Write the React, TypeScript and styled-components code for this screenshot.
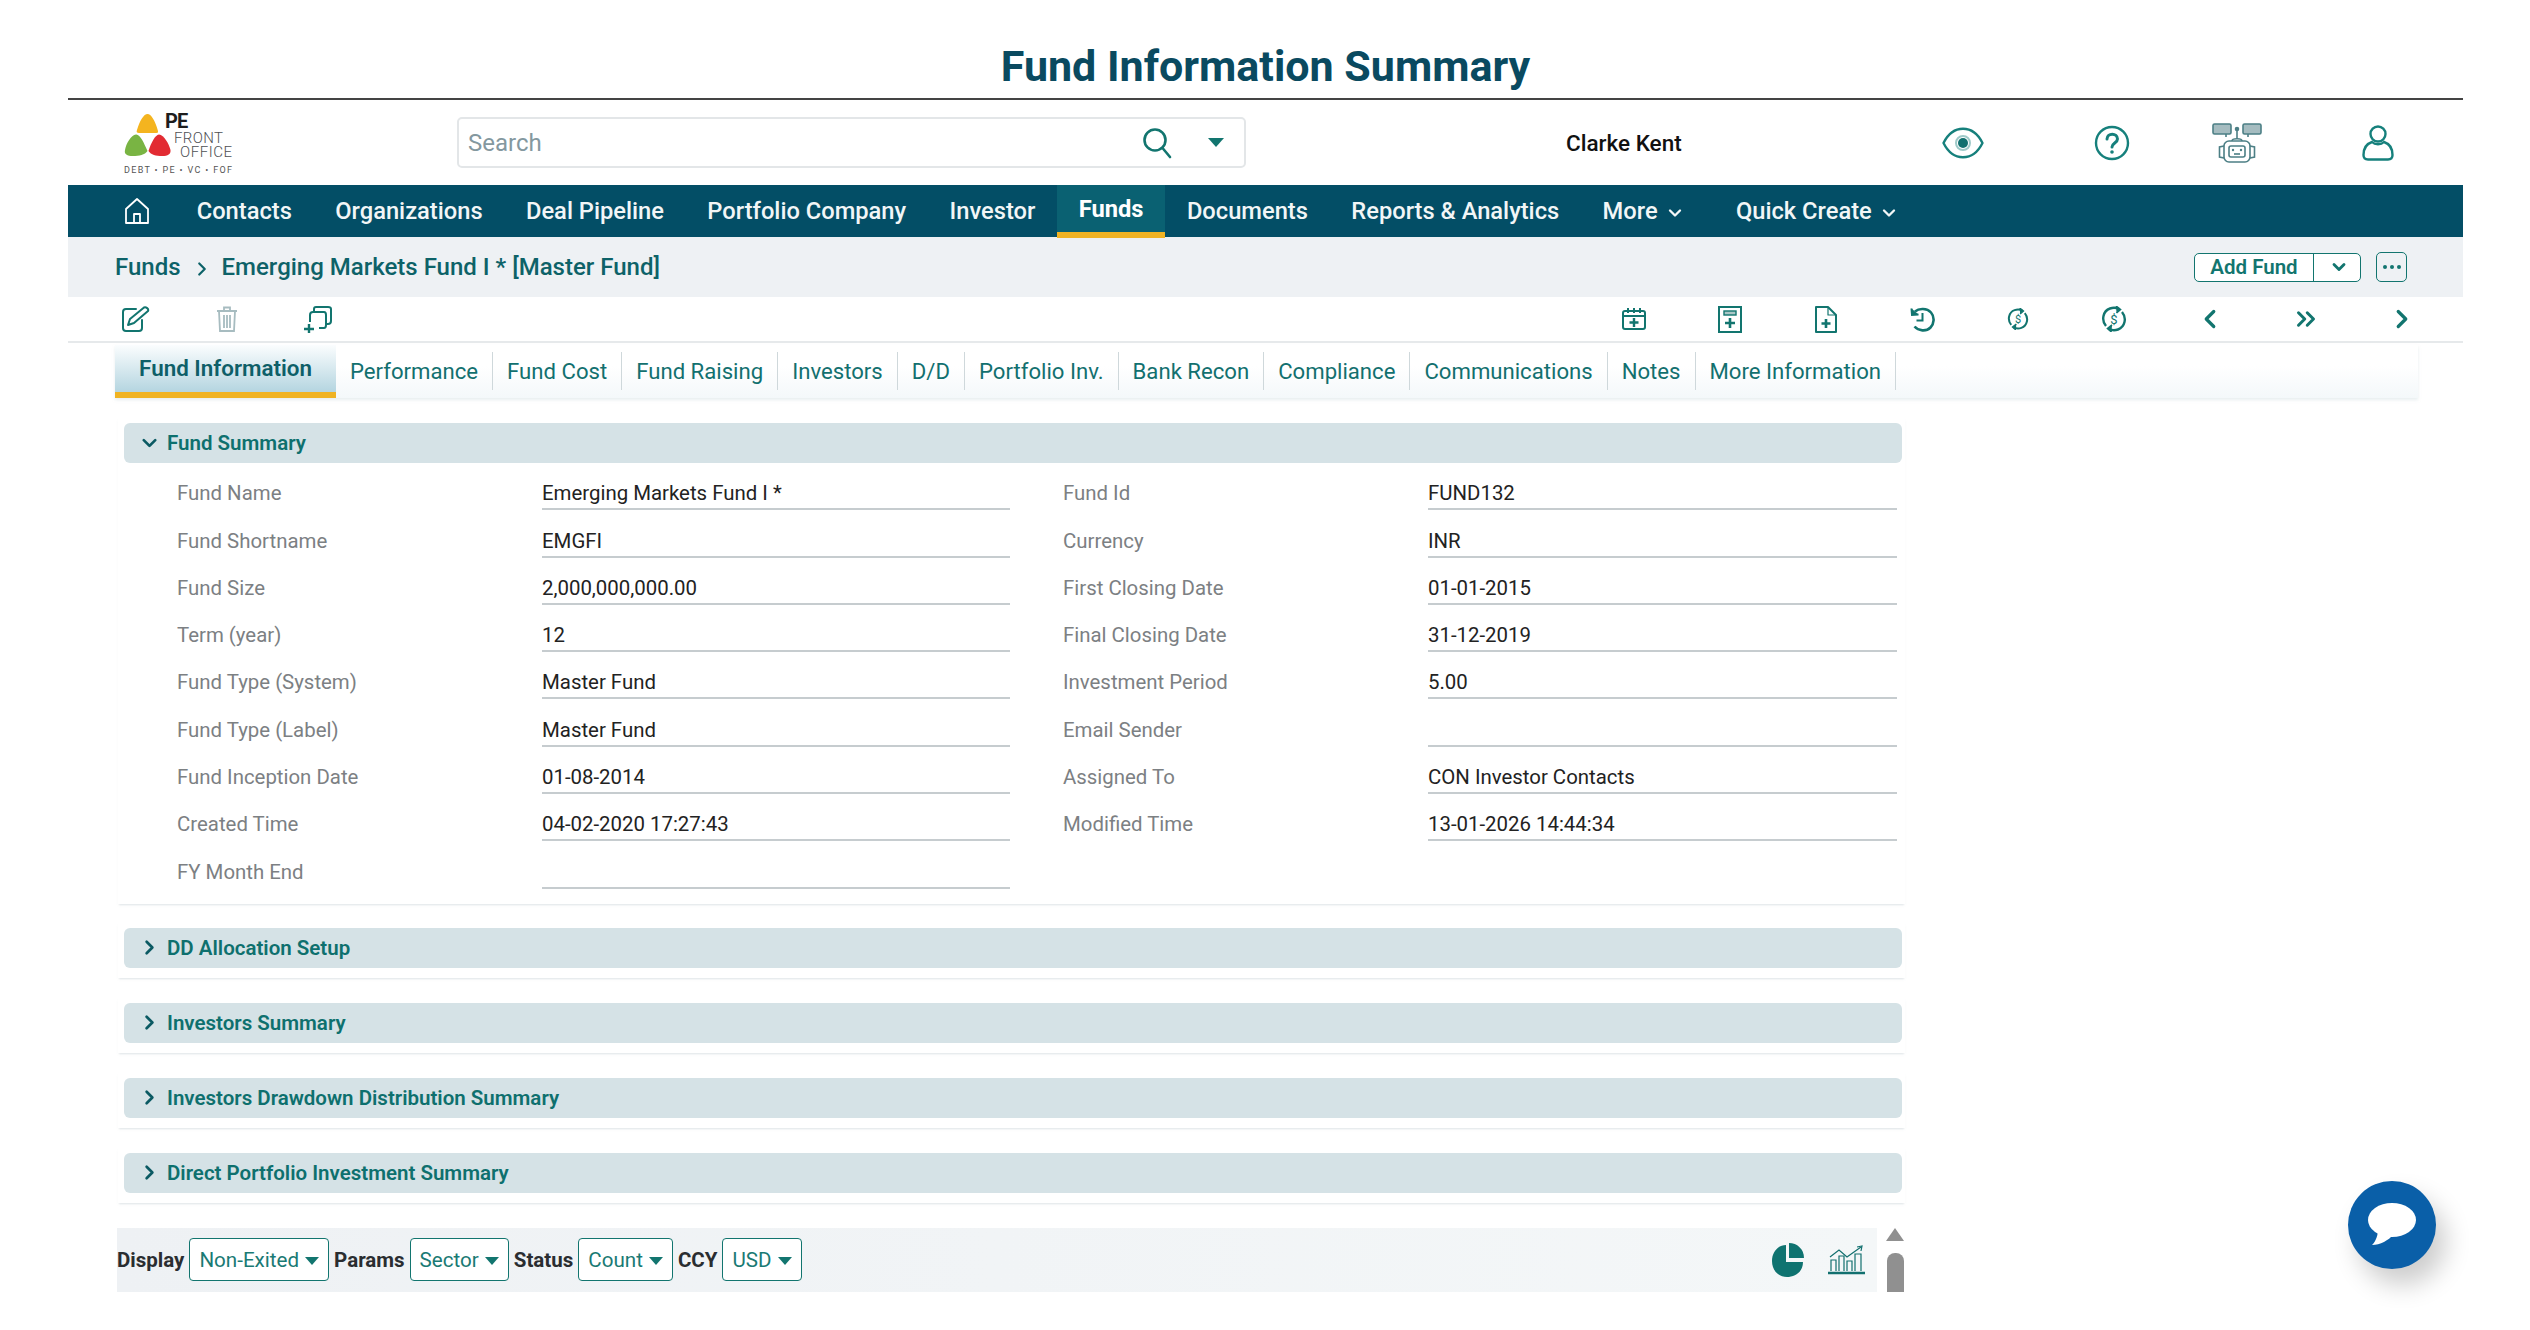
import React from "react";
import styled, { createGlobalStyle } from "styled-components";
import { ChevronDown, ChevronRight, ChevronLeft, ChevronsRight } from "lucide-react";

const TEAL = "#12756f";
const NAVY = "#034e66";

const GlobalStyle = createGlobalStyle`
  html, body {
    margin: 0;
    padding: 0;
    background: #fff;
    font-family: Roboto, "Liberation Sans", sans-serif;
    overflow: hidden;
  }
`;

const Page = styled.div`
  width: 2530px;
  height: 1330px;
  padding: 0 67px 0 68px;
  box-sizing: border-box;
`;

const PageTitle = styled.h1`
  margin: 0;
  height: 98px;
  line-height: 133px;
  overflow: hidden;
  text-align: center;
  font-size: 43px;
  font-weight: 700;
  color: #0a4a60;
  border-bottom: 2px solid #444;
  box-sizing: content-box;
`;

const Header = styled.header`
  height: 85px;
  display: flex;
  align-items: center;
  & > * {
    flex: none;
  }
`;

const LogoBox = styled.div`
  width: 389px;
  padding-left: 54px;
  box-sizing: border-box;
  display: flex;
`;

const SearchBox = styled.div`
  width: 789px;
  height: 51px;
  box-sizing: border-box;
  border: 2px solid #e3e6e8;
  border-radius: 5px;
  display: flex;
  align-items: center;
  padding: 0 20px 0 9px;
`;

const SearchText = styled.span`
  flex: 1;
  font-size: 24px;
  color: #84989f;
`;

const Caret = styled.span`
  width: 0;
  height: 0;
  border-left: 8px solid transparent;
  border-right: 8px solid transparent;
  border-top: 9px solid ${TEAL};
  margin-left: 36px;
`;

const UserName = styled.div`
  width: 114px;
  margin-left: 320px;
  font-size: 22.5px;
  font-weight: 500;
  color: #111;
  white-space: nowrap;
`;

const HeaderIcon = styled.div<{ $gap: number }>`
  display: flex;
  margin-left: ${(p) => p.$gap}px;
`;

const Nav = styled.nav`
  height: 52px;
  background: ${NAVY};
  display: flex;
  padding-left: 30px;
`;

const HomeSlot = styled.div`
  width: 77px;
  display: flex;
  align-items: center;
  justify-content: center;
`;

const NavItem = styled.div<{ $active?: boolean }>`
  padding: 0 21.7px;
  display: flex;
  align-items: center;
  gap: 7px;
  font-size: 23.7px;
  color: ${(p) => (p.$active ? "#fff" : "#f2f6f7")};
  background: ${(p) => (p.$active ? "#0a6172" : "transparent")};
  border-bottom: ${(p) => (p.$active ? "6px solid #f0b323" : "none")};
  height: ${(p) => (p.$active ? "53px" : "52px")};
  box-sizing: border-box;
  white-space: nowrap;
  font-weight: ${(p) => (p.$active ? 700 : 500)};
`;

const NavChevron = styled(ChevronDown)`
  margin-right: 8px;
  margin-top: 3px;
`;

const BreadcrumbBar = styled.div`
  height: 60px;
  background: #eef1f4;
  display: flex;
  align-items: center;
  padding: 0 56px 0 47px;
`;

const Crumb = styled.span`
  font-size: 24px;
  font-weight: 500;
  color: #0d6268;
`;

const CrumbSep = styled.span`
  display: flex;
  margin: 4px 9px 0 10px;
  color: #0d6268;
`;

const BarActions = styled.div`
  margin-left: auto;
  display: flex;
  align-items: center;
  gap: 15px;
`;

const SplitButton = styled.div`
  width: 167px;
  height: 29px;
  box-sizing: border-box;
  background: #fff;
  border: 1.5px solid ${TEAL};
  border-radius: 5px;
  display: flex;
  align-items: center;
  font-size: 20.5px;
  font-weight: 600;
  color: ${TEAL};
`;

const SplitLabel = styled.span`
  width: 118px;
  text-align: center;
  border-right: 1.5px solid ${TEAL};
  line-height: 27px;
`;

const SplitCaret = styled.span`
  flex: 1;
  display: flex;
  justify-content: center;
  padding-left: 3px;
  color: ${TEAL};
`;

const DotsButton = styled.div`
  width: 31px;
  height: 30px;
  box-sizing: border-box;
  border: 1.5px solid ${TEAL};
  border-radius: 5px;
  display: flex;
  align-items: center;
  justify-content: center;
  gap: 3px;
`;

const Dot = styled.i`
  width: 4px;
  height: 4px;
  border-radius: 50%;
  background: ${TEAL};
`;

const Toolbar = styled.div`
  height: 46px;
  box-sizing: border-box;
  border-bottom: 2px solid #e6e9eb;
  display: flex;
  align-items: center;
  justify-content: space-between;
  padding: 0 13px 0 22px;
`;

const ToolGroup = styled.div`
  display: flex;
`;

const ToolSlot = styled.div<{ $w: number }>`
  width: ${(p) => p.$w}px;
  display: flex;
  justify-content: center;
  align-items: center;
  color: ${TEAL};
`;

const Tabs = styled.div`
  margin: 2px 45px 0 47px;
  height: 53px;
  display: flex;
  background: linear-gradient(#fff 40%, #f4f8fa);
  box-shadow: 0 2px 3px rgba(190, 205, 212, 0.35);
`;

const ActiveTab = styled.div`
  width: 221px;
  height: 53px;
  box-sizing: border-box;
  text-align: center;
  font-size: 22.4px;
  font-weight: 600;
  color: #0e5f68;
  line-height: 47px;
  background: linear-gradient(#fbfdfe, #b4d5e0);
  border-bottom: 6px solid #f0b323;
`;

const Tab = styled.div`
  padding: 0 14px;
  margin-top: 7px;
  height: 38px;
  line-height: 39px;
  font-size: 22.15px;
  color: #12706f;
  border-right: 1.5px solid #cfd8db;
  white-space: nowrap;
`;

const Content = styled.main`
  padding: 20px 0 0 50px;
  width: 1787px;
  box-sizing: content-box;
`;

const Section = styled.section<{ $open?: boolean }>`
  padding: 5px 3px ${(p) => (p.$open ? "15px" : "10px")} 6px;
  margin-bottom: ${(p) => (p.$open ? "19px" : "20px")};
  box-shadow: 0 2px 2px -1px rgba(190, 200, 205, 0.5);
`;

const SectionHead = styled.div`
  height: 40px;
  background: #d5e2e6;
  border-radius: 6px;
  display: flex;
  align-items: center;
  padding-left: 14px;
  gap: 6px;
  font-size: 20.5px;
  font-weight: 600;
  color: #0e706e;
`;

const HeadChevron = styled.span`
  width: 23px;
  display: flex;
  justify-content: center;
  color: #0b5a63;
`;

const FormGrid = styled.div`
  display: grid;
  grid-template-columns: 365px 468px 53px 365px 469px;
  grid-auto-rows: 47.3px;
  padding-left: 53px;
`;

const FieldLabel = styled.div`
  align-self: end;
  padding-bottom: 5px;
  line-height: 24px;
  font-size: 20.4px;
  color: #7c8083;
`;

const FieldValue = styled.div`
  align-self: end;
  height: 32px;
  box-sizing: border-box;
  line-height: 30px;
  padding-bottom: 2px;
  border-bottom: 2px solid #c6cccf;
  font-size: 20.4px;
  color: #222;
`;

const Spacer = styled.div``;

const BottomRow = styled.div`
  display: flex;
  gap: 9px;
  margin-top: 25px;
  margin-left: -1px;
  width: 1787px;
`;

const FilterBar = styled.div`
  flex: 1;
  height: 64px;
  background: linear-gradient(90deg, #eef1f4, #f4f7f8);
  display: flex;
  align-items: center;
  padding-right: 11px;
  box-sizing: border-box;
`;

const FilterLabel = styled.span`
  font-size: 20.5px;
  font-weight: 700;
  color: #2a2d30;
  margin-right: 5px;
`;

const Select = styled.div`
  height: 43px;
  box-sizing: border-box;
  padding: 0 9px;
  background: #fff;
  border: 1.5px solid ${TEAL};
  border-radius: 4px;
  margin-right: 5px;
  display: flex;
  align-items: center;
  gap: 6px;
  font-size: 20.6px;
  color: #1a7a74;
`;

const SelectCaret = styled.span`
  width: 0;
  height: 0;
  border-left: 7px solid transparent;
  border-right: 7px solid transparent;
  border-top: 8px solid ${TEAL};
  margin-top: 2px;
`;

const ChartIcons = styled.div`
  margin-left: auto;
  display: flex;
  align-items: center;
  gap: 23px;
`;

const FakeScroll = styled.div`
  width: 18px;
  height: 64px;
  display: flex;
  flex-direction: column;
  align-items: center;
`;

const ScrollUp = styled.span`
  width: 0;
  height: 0;
  border-left: 9px solid transparent;
  border-right: 9px solid transparent;
  border-bottom: 13px solid #909090;
`;

const ScrollThumb = styled.span`
  margin-top: 12px;
  width: 17px;
  flex: 1;
  background: #909090;
  border-radius: 8px 8px 0 0;
`;

const ChatButton = styled.div`
  position: fixed;
  left: 2348px;
  top: 1181px;
  width: 88px;
  height: 88px;
  border-radius: 50%;
  background: #0a5fa8;
  box-shadow: 10px 16px 26px rgba(0, 0, 0, 0.2);
  display: flex;
  align-items: center;
  justify-content: center;
`;

const Logo = () => (
  <svg width="114" height="68" viewBox="0 0 114 68">
    <path d="M25.5 5 C29 5 33 11 36 22 C36.5 24 35 24 33 24 L17 24 C15 24 14 23 15 21 C18 11 22 5 25.5 5 Z" fill="#f4b41f" />
    <path d="M14 25.5 C18 25 22 34 25.5 42 C23 46 17 47 11 47 C5 47 2 45 3 41 C4 35 9 26 14 25.5 Z" fill="#79b443" />
    <path d="M37 25.5 C33 26 29 34 26.5 42 C29 46 34 47 40 47 C46 47 49 45 48.5 41 C47 35 42 26 37 25.5 Z" fill="#e22b32" />
    <text x="43" y="19" fontFamily="Roboto" fontSize="20" fontWeight="700" fill="#1d1d1d" letterSpacing="-1">PE</text>
    <text x="52" y="34" fontFamily="Roboto" fontSize="15" fontWeight="300" fill="#4e5053" textLength="49">FRONT</text>
    <text x="58" y="48" fontFamily="Roboto" fontSize="15" fontWeight="300" fill="#4e5053" textLength="52">OFFICE</text>
    <text x="2" y="64" fontFamily="Roboto" fontSize="9" fill="#555" textLength="108">DEBT  •  PE  •  VC  •  FOF</text>
  </svg>
);

const SearchIcon = () => (
  <svg width="30" height="32" viewBox="0 0 30 32" fill="none" stroke={TEAL} strokeWidth="2.6" strokeLinecap="round">
    <circle cx="13" cy="13" r="10.5" />
    <path d="M20.5 21 L28 30" />
  </svg>
);

const EyeIcon = () => (
  <svg width="42" height="32" viewBox="0 0 42 32" fill="none" stroke="#16807c" strokeWidth="2.4">
    <path d="M1.5 16 C11 -3 31 -3 40.5 16 C31 35 11 35 1.5 16 Z" strokeLinejoin="round" />
    <circle cx="21" cy="16" r="7" stroke="#9ec9c8" strokeWidth="2" />
    <circle cx="21" cy="16" r="5" fill="#12706f" stroke="none" />
  </svg>
);

const HelpIcon = () => (
  <svg width="36" height="36" viewBox="0 0 36 36" fill="none" stroke="#16807c" strokeWidth="2.4" strokeLinecap="round">
    <circle cx="18" cy="18" r="16" />
    <path d="M13 14 C13 7.5 23.5 7.5 23.5 14 C23.5 18 18 18 18 22" strokeWidth="3" />
    <circle cx="18" cy="27" r="1.8" fill="#16807c" stroke="none" />
  </svg>
);

const RobotIcon = () => (
  <svg width="50" height="40" viewBox="0 0 50 40" fill="none" stroke="#4c7f85" strokeWidth="1.6">
    <rect x="1" y="1" width="18" height="10" rx="1.5" fill="#a5bcc0" />
    <rect x="31" y="1" width="18" height="10" rx="1.5" fill="#a5bcc0" />
    <path d="M14 11 L14 14 M36 11 L36 14 M25 6 L25 16" />
    <circle cx="25" cy="6" r="1.5" fill="#4c7f85" />
    <path d="M20 18 C20 15 30 15 30 18" />
    <rect x="12" y="18" width="26" height="21" rx="5" />
    <rect x="17" y="23" width="16" height="11" rx="2" />
    <circle cx="21" cy="27" r="1.2" fill="#4c7f85" stroke="none" />
    <circle cx="29" cy="27" r="1.2" fill="#4c7f85" stroke="none" />
    <path d="M22 31 L28 31" />
    <path d="M12 23 L7.5 24 L7.5 34 L12 35 M38 23 L42.5 24 L42.5 34 L38 35" />
  </svg>
);

const UserIcon = () => (
  <svg width="32" height="36" viewBox="0 0 32 36" fill="none" stroke="#16807c" strokeWidth="2.4" strokeLinejoin="round">
    <circle cx="16" cy="9" r="7.5" />
    <path d="M10 17 C4 19 1.5 24 1.5 30 C1.5 33 3 34.5 6 34.5 L26 34.5 C29 34.5 30.5 33 30.5 30 C30.5 24 28 19 22 17 C19 20 13 20 10 17 Z" />
  </svg>
);

const HomeIcon = () => (
  <svg width="26" height="28" viewBox="0 0 26 28" fill="none" stroke="#fff" strokeWidth="1.8" strokeLinejoin="round">
    <path d="M2 12 L13 2 L24 12 L24 26 L2 26 Z" />
    <path d="M10 26 L10 17 L16 17 L16 26" />
  </svg>
);

const EditIcon = () => (
  <svg width="28" height="26" viewBox="0 0 28 26" fill="none" stroke={TEAL} strokeWidth="2" strokeLinejoin="round" strokeLinecap="round">
    <path d="M14 3 L4 3 C2 3 1 4 1 6 L1 22 C1 24 2 25 4 25 L17 25 C19 25 20 24 20 22 L20 14" />
    <path d="M6 19 L8 13 L22 1.5 C24 0.5 27 3 26 5 L12 17 Z" />
  </svg>
);

const TrashIcon = () => (
  <svg width="20" height="26" viewBox="0 0 20 26" fill="none" stroke="#a7bcc0" strokeWidth="1.8">
    <path d="M0 5 L20 5 M7 5 L7 1.5 L13 1.5 L13 5" />
    <path d="M2 5 L3 25 L17 25 L18 5" />
    <path d="M7 9 L7 22 M10 9 L10 22 M13 9 L13 22" />
  </svg>
);

const CopyAddIcon = () => (
  <svg width="28" height="27" viewBox="0 0 28 27" fill="none" stroke={TEAL} strokeWidth="2" strokeLinejoin="round">
    <path d="M10 6 L10 3 C10 2 11 1 12 1 L24 1 C26 1 27 2 27 3 L27 15 C27 17 26 18 24 18 L22 18" />
    <path d="M6 16 L6 9 C6 7 7 6 9 6 L20 6 C21 6 22 7 22 9 L22 19 C22 21 21 22 20 22 L15 22" />
    <path d="M0 23 L10 23 M5 18 L5 27" strokeWidth="2.4" />
  </svg>
);

const CalendarAddIcon = () => (
  <svg width="24" height="22" viewBox="0 0 24 22" fill="none" stroke={TEAL} strokeWidth="2">
    <rect x="1" y="3" width="22" height="18" rx="2" />
    <path d="M1 8 L23 8 M6 0 L6 5 M12 0 L12 5 M18 0 L18 5" />
    <path d="M12 10 L12 19 M7.5 14.5 L16.5 14.5" strokeWidth="2.4" />
  </svg>
);

const CalcAddIcon = () => (
  <svg width="24" height="27" viewBox="0 0 24 27" fill="none" stroke={TEAL} strokeWidth="2">
    <rect x="1" y="1" width="22" height="25" />
    <rect x="6" y="5" width="12" height="4" fill="#a9c6c6" strokeWidth="1.4" />
    <path d="M12 12 L12 22 M7 17 L17 17" strokeWidth="2.6" />
  </svg>
);

const FileAddIcon = () => (
  <svg width="22" height="27" viewBox="0 0 22 27" fill="none" stroke={TEAL} strokeWidth="2" strokeLinejoin="round">
    <path d="M1 1 L13 1 L21 9 L21 26 L1 26 Z" />
    <path d="M13 1 L13 9 L21 9" strokeWidth="1.2" />
    <path d="M11 13 L11 22 M6.5 17.5 L15.5 17.5" strokeWidth="2.6" />
  </svg>
);

const HistoryIcon = () => (
  <svg width="25" height="25" viewBox="0 0 25 25" fill="none" stroke={TEAL} strokeWidth="2.6">
    <path d="M5 4.5 C9 1 17 1 21 5.5 C25 10 24 17 20.5 20.5 C16 25 8.5 24 4.5 19.5" />
    <path d="M1.5 1.5 L2 8 L8.5 7.5" strokeWidth="2" fill={TEAL} />
    <path d="M12.5 6 L12.5 13.5 L6.5 13.5" strokeWidth="2" />
  </svg>
);

const DollarCycleIcon = ({ size }: { size: number }) => (
  <svg width={size} height={size} viewBox="0 0 26 26" fill="none" stroke={TEAL} strokeWidth="2.4">
    <path d="M5 20 C0 14 2 5 9 2.5 C12 1.5 15 1.5 18 3" />
    <path d="M21 6 C26 12 24 21 17 23.5 C14 24.5 11 24.5 8 23" />
    <path d="M15 0 L19.5 3.5 L15.5 7 M11 19 L6.5 22.5 L10.5 26" strokeWidth="1.6" fill={TEAL} />
    <text x="13" y="18" textAnchor="middle" fontFamily="Roboto" fontSize="13" fill={TEAL} stroke="none">$</text>
  </svg>
);

const PieIcon = () => (
  <svg width="34" height="36" viewBox="0 0 34 36" fill="#0f7370">
    <path d="M15 3 L15 20 L32 20 C32 30 24 35 16 35 C7 35 1 28 1 19 C1 10 7 3 15 3 Z" />
    <path d="M18 1 C26 1 33 7 33 16 L18 16 Z" />
  </svg>
);

const GrowthIcon = () => (
  <svg width="38" height="30" viewBox="0 0 38 30" fill="none" stroke="#12706f" strokeWidth="1.2">
    <path d="M3 26 L3 15 L8 15 L8 26 M11 26 L11 11 L16 11 L16 26 M19 26 L19 16 L24 16 L24 26 M27 26 L27 9 L33 9 L33 26" />
    <path d="M2 12 L11 5 L19 12 L33 2 M29 2 L34 1 L33 6" />
    <path d="M0 28 L37 28" strokeWidth="2.6" />
  </svg>
);

const ChatIcon = () => (
  <svg width="50" height="46" viewBox="0 0 50 46" fill="#fff">
    <ellipse cx="25" cy="18" rx="24" ry="17" />
    <path d="M11 27 C11 33 9 39 5 43 C13 43 22 38 26 33 Z" />
  </svg>
);

const navItems = ["Contacts", "Organizations", "Deal Pipeline", "Portfolio Company", "Investor"];
const navItemsAfter = ["Documents", "Reports & Analytics"];
const tabs = [
  "Performance", "Fund Cost", "Fund Raising", "Investors", "D/D", "Portfolio Inv.",
  "Bank Recon", "Compliance", "Communications", "Notes", "More Information",
];
const rows: [string, string, string, string][] = [
  ["Fund Name", "Emerging Markets Fund I *", "Fund Id", "FUND132"],
  ["Fund Shortname", "EMGFI", "Currency", "INR"],
  ["Fund Size", "2,000,000,000.00", "First Closing Date", "01-01-2015"],
  ["Term (year)", "12", "Final Closing Date", "31-12-2019"],
  ["Fund Type (System)", "Master Fund", "Investment Period", "5.00"],
  ["Fund Type (Label)", "Master Fund", "Email Sender", ""],
  ["Fund Inception Date", "01-08-2014", "Assigned To", "CON Investor Contacts"],
  ["Created Time", "04-02-2020 17:27:43", "Modified Time", "13-01-2026 14:44:34"],
];
const closedSections = [
  "DD Allocation Setup",
  "Investors Summary",
  "Investors Drawdown Distribution Summary",
  "Direct Portfolio Investment Summary",
];
const filters = [
  ["Display", "Non-Exited"],
  ["Params", "Sector"],
  ["Status", "Count"],
  ["CCY", "USD"],
];

export default function App() {
  return (
    <Page>
      <GlobalStyle />
      <PageTitle>Fund Information Summary</PageTitle>
      <Header>
        <LogoBox><Logo /></LogoBox>
        <SearchBox>
          <SearchText>Search</SearchText>
          <SearchIcon />
          <Caret />
        </SearchBox>
        <UserName>Clarke Kent</UserName>
        <HeaderIcon $gap={262}><EyeIcon /></HeaderIcon>
        <HeaderIcon $gap={110}><HelpIcon /></HeaderIcon>
        <HeaderIcon $gap={82}><RobotIcon /></HeaderIcon>
        <HeaderIcon $gap={100}><UserIcon /></HeaderIcon>
      </Header>
      <Nav>
        <HomeSlot><HomeIcon /></HomeSlot>
        {navItems.map((n) => <NavItem key={n}>{n}</NavItem>)}
        <NavItem $active>Funds</NavItem>
        {navItemsAfter.map((n) => <NavItem key={n}>{n}</NavItem>)}
        <NavItem>More <NavChevron size={20} strokeWidth={2.8} /></NavItem>
        <NavItem>Quick Create <NavChevron size={20} strokeWidth={2.8} /></NavItem>
      </Nav>
      <BreadcrumbBar>
        <Crumb>Funds</Crumb>
        <CrumbSep><ChevronRight size={22} strokeWidth={2.4} /></CrumbSep>
        <Crumb>Emerging Markets Fund I * [Master Fund]</Crumb>
        <BarActions>
          <SplitButton>
            <SplitLabel>Add Fund</SplitLabel>
            <SplitCaret><ChevronDown size={20} strokeWidth={3.4} /></SplitCaret>
          </SplitButton>
          <DotsButton><Dot /><Dot /><Dot /></DotsButton>
        </BarActions>
      </BreadcrumbBar>
      <Toolbar>
        <ToolGroup>
          <ToolSlot $w={91}><EditIcon /></ToolSlot>
          <ToolSlot $w={91}><TrashIcon /></ToolSlot>
          <ToolSlot $w={91}><CopyAddIcon /></ToolSlot>
        </ToolGroup>
        <ToolGroup>
          <ToolSlot $w={96}><CalendarAddIcon /></ToolSlot>
          <ToolSlot $w={96}><CalcAddIcon /></ToolSlot>
          <ToolSlot $w={96}><FileAddIcon /></ToolSlot>
          <ToolSlot $w={96}><HistoryIcon /></ToolSlot>
          <ToolSlot $w={96}><DollarCycleIcon size={22} /></ToolSlot>
          <ToolSlot $w={96}><DollarCycleIcon size={26} /></ToolSlot>
          <ToolSlot $w={96}><ChevronLeft size={30} strokeWidth={2.6} /></ToolSlot>
          <ToolSlot $w={96}><ChevronsRight size={30} strokeWidth={2.4} /></ToolSlot>
          <ToolSlot $w={96}><ChevronRight size={30} strokeWidth={2.6} /></ToolSlot>
        </ToolGroup>
      </Toolbar>
      <Tabs>
        <ActiveTab>Fund Information</ActiveTab>
        {tabs.map((t) => <Tab key={t}>{t}</Tab>)}
      </Tabs>
      <Content>
        <Section $open>
          <SectionHead>
            <HeadChevron><ChevronDown size={26} strokeWidth={2.8} /></HeadChevron>
            Fund Summary
          </SectionHead>
          <FormGrid>
            {rows.map(([a, b, c, d]) => (
              <React.Fragment key={a}>
                <FieldLabel>{a}</FieldLabel>
                <FieldValue>{b}</FieldValue>
                <Spacer />
                <FieldLabel>{c}</FieldLabel>
                <FieldValue>{d}</FieldValue>
              </React.Fragment>
            ))}
            <FieldLabel>FY Month End</FieldLabel>
            <FieldValue />
          </FormGrid>
        </Section>
        {closedSections.map((s) => (
          <Section key={s}>
            <SectionHead>
              <HeadChevron><ChevronRight size={25} strokeWidth={2.8} /></HeadChevron>
              {s}
            </SectionHead>
          </Section>
        ))}
        <BottomRow>
          <FilterBar>
            {filters.map(([label, value]) => (
              <React.Fragment key={label}>
                <FilterLabel>{label}</FilterLabel>
                <Select>{value}<SelectCaret /></Select>
              </React.Fragment>
            ))}
            <ChartIcons><PieIcon /><GrowthIcon /></ChartIcons>
          </FilterBar>
          <FakeScroll><ScrollUp /><ScrollThumb /></FakeScroll>
        </BottomRow>
      </Content>
      <ChatButton><ChatIcon /></ChatButton>
    </Page>
  );
}
